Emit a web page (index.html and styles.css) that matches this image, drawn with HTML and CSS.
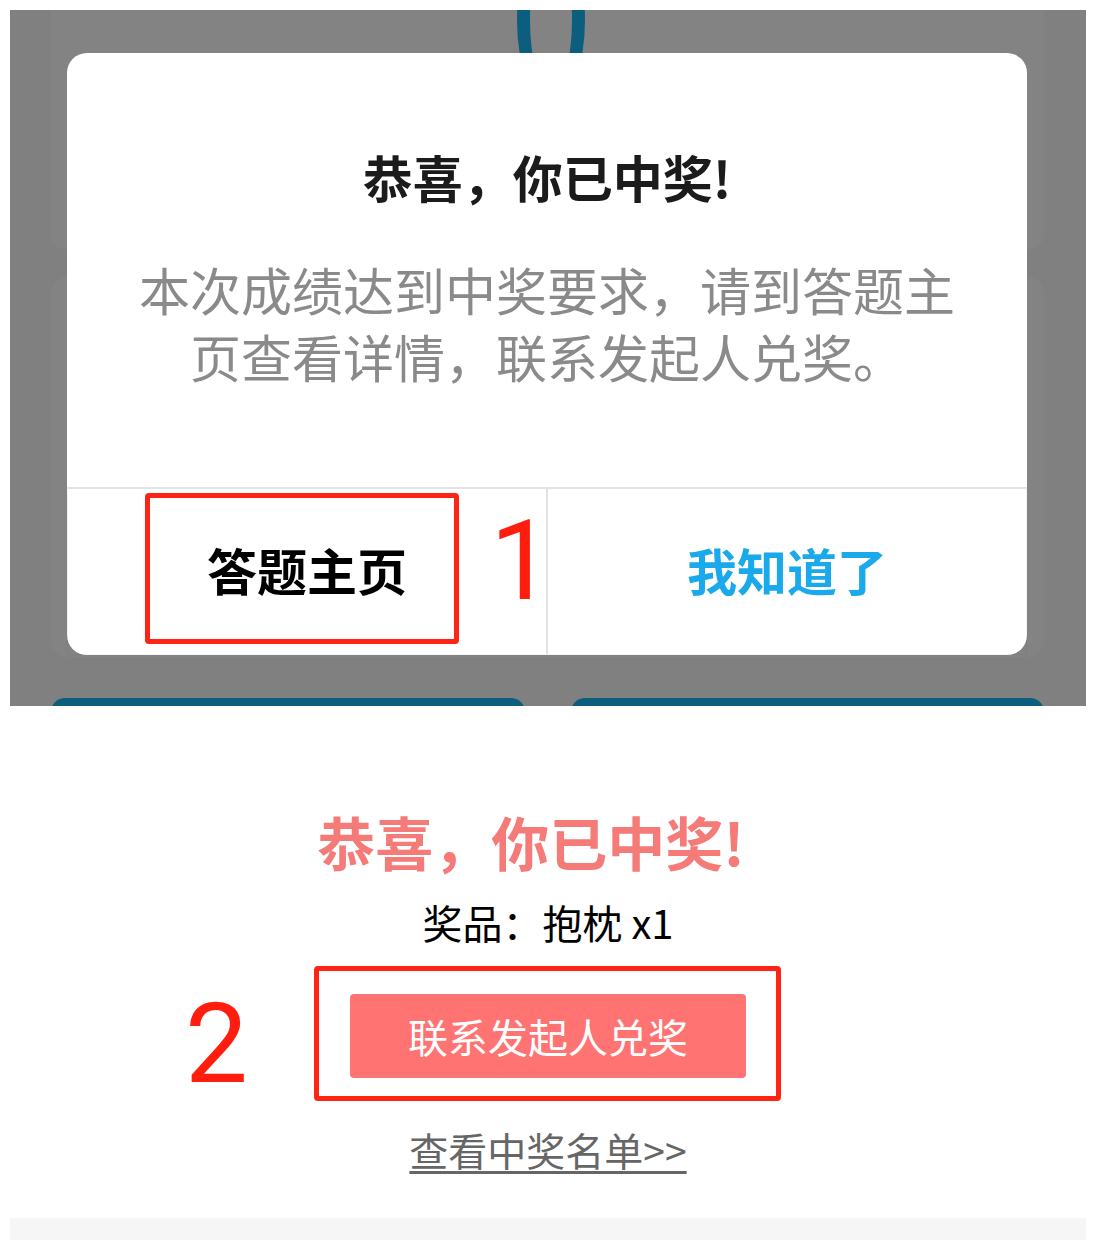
FILE: index.html
```html
<!DOCTYPE html>
<html lang="zh-CN">
<head>
<meta charset="utf-8">
<title>中奖</title>
<link rel="stylesheet" href="styles.css">
</head>
<body>
<div class="page">
  <section class="shot shot-top">
    <div class="bg-content">
      <div class="card card-score">
        <div class="ring"></div>
      </div>
      <div class="card card-info"></div>
      <div class="bg-buttons">
        <div class="bg-btn"></div>
        <div class="bg-btn"></div>
      </div>
    </div>
    <div class="modal">
      <h2 class="modal-title">恭喜，你已中奖!</h2>
      <p class="modal-text">本次成绩达到中奖要求，请到答题主页查看详情，联系发起人兑奖。</p>
      <div class="modal-actions">
        <div class="action action-home">答题主页</div>
        <div class="action action-ok">我知道了</div>
      </div>
      <div class="mark mark-box-1"></div>
      <div class="mark-num mark-num-1">1</div>
    </div>
  </section>

  <section class="shot shot-bottom">
    <h2 class="win-title">恭喜，你已中奖!</h2>
    <p class="prize">奖品：抱枕 x1</p>
    <div class="mark-wrap">
      <div class="contact-btn">联系发起人兑奖</div>
      <div class="mark-num mark-num-2">2</div>
    </div>
    <a class="list-link" href="#">查看中奖名单&gt;&gt;</a>
  </section>
  <div class="footer-strip"></div>
</div>
</body>
</html>
```

FILE: styles.css
```css
* { box-sizing: border-box; }
html, body { margin: 0; padding: 0; background: #ffffff; }
body { font-family: "Noto Sans CJK SC", "Noto Sans", sans-serif; }

.page { padding: 10px 10px 0; }

.shot-top {
  position: relative;
  height: 696px;
  background: #808080;
  overflow: hidden;
}

.bg-content {
  padding: 0 42px 0 41px;
  display: flex;
  flex-direction: column;
}
.card {
  background: #838383;
  border-radius: 16px;
}
.card-score {
  height: 315px;
  margin-top: -75px;
  display: flex;
  justify-content: center;
  overflow: hidden;
}
.ring {
  width: 68px;
  height: 170px;
  margin-left: 7px;
  border: 13px solid #0b5e7e;
  border-radius: 50%;
}
.card-info {
  height: 380px;
  margin-top: 27px;
}
.bg-buttons {
  display: flex;
  gap: 46px;
  margin-top: 41px;
}
.bg-btn {
  flex: 1;
  height: 40px;
  background: #0b5e7e;
  border-radius: 14px 14px 0 0;
}

.modal {
  position: absolute;
  left: 57px;
  top: 43px;
  width: 960px;
  height: 602px;
  background: #ffffff;
  border-radius: 20px;
  display: flex;
  flex-direction: column;
  align-items: center;
}
.modal-title {
  margin: 93px 0 0;
  font-size: 50px;
  line-height: 60px;
  font-weight: 700;
  color: #1b1b1b;
}
.modal-text {
  margin: 50px 0 0;
  padding: 0 60px;
  font-size: 51px;
  line-height: 67px;
  color: #8a8a8a;
  text-align: center;
}
.modal-actions {
  margin-top: auto;
  width: 100%;
  height: 168px;
  display: flex;
  border-top: 2px solid #e3e3e3;
  border-left: 1px solid rgba(0,0,0,0.04);
  border-right: 1px solid rgba(0,0,0,0.04);
  border-bottom: 1px solid rgba(0,0,0,0.04);
}
.action {
  flex: 1;
  display: flex;
  align-items: center;
  justify-content: center;
  padding-bottom: 6px;
  font-size: 50px;
  font-weight: 700;
}
.action-home { color: #000000; border-right: 2px solid #e3e3e3; }
.action-ok { color: #1aa9ea; }

.mark {
  position: absolute;
  border: 5px solid #ff2313;
  border-radius: 4px;
}
.mark-box-1 {
  left: 78px;
  top: 440px;
  width: 314px;
  height: 151px;
}
.mark-num {
  position: absolute;
  font-family: Roboto, "Liberation Sans", sans-serif;
  font-weight: 400;
  font-size: 112px;
  line-height: 1;
  color: #ff1d0e;
}
.mark-num-1 { left: 423px; top: 452px; }

.shot-bottom {
  height: 512px;
  display: flex;
  flex-direction: column;
  align-items: center;
  padding-top: 100px;
}
.win-title {
  margin: 0;
  padding-right: 34px;
  font-size: 58px;
  line-height: 70px;
  font-weight: 700;
  color: #f57b79;
}
.prize {
  margin: 21px 0 0;
  font-size: 40px;
  line-height: 50px;
  color: #000000;
}
.mark-wrap {
  position: relative;
  margin-top: 19px;
  margin-left: -1px;
  border: 5px solid #ff2313;
  border-radius: 4px;
  padding: 23px 30px 18px 31px;
}
.contact-btn {
  width: 396px;
  height: 84px;
  background: #ff7373;
  border-radius: 4px;
  color: #ffffff;
  font-size: 40px;
  display: flex;
  align-items: center;
  justify-content: center;
}
.mark-num-2 { left: -134px; top: 17px; }
.list-link {
  margin-top: 23px;
  font-size: 39px;
  line-height: 50px;
  color: #666666;
  text-decoration: underline;
  text-decoration-thickness: 3px;
  text-underline-offset: 5px;
}

.footer-strip {
  height: 22px;
  background: #f6f6f6;
}
```
